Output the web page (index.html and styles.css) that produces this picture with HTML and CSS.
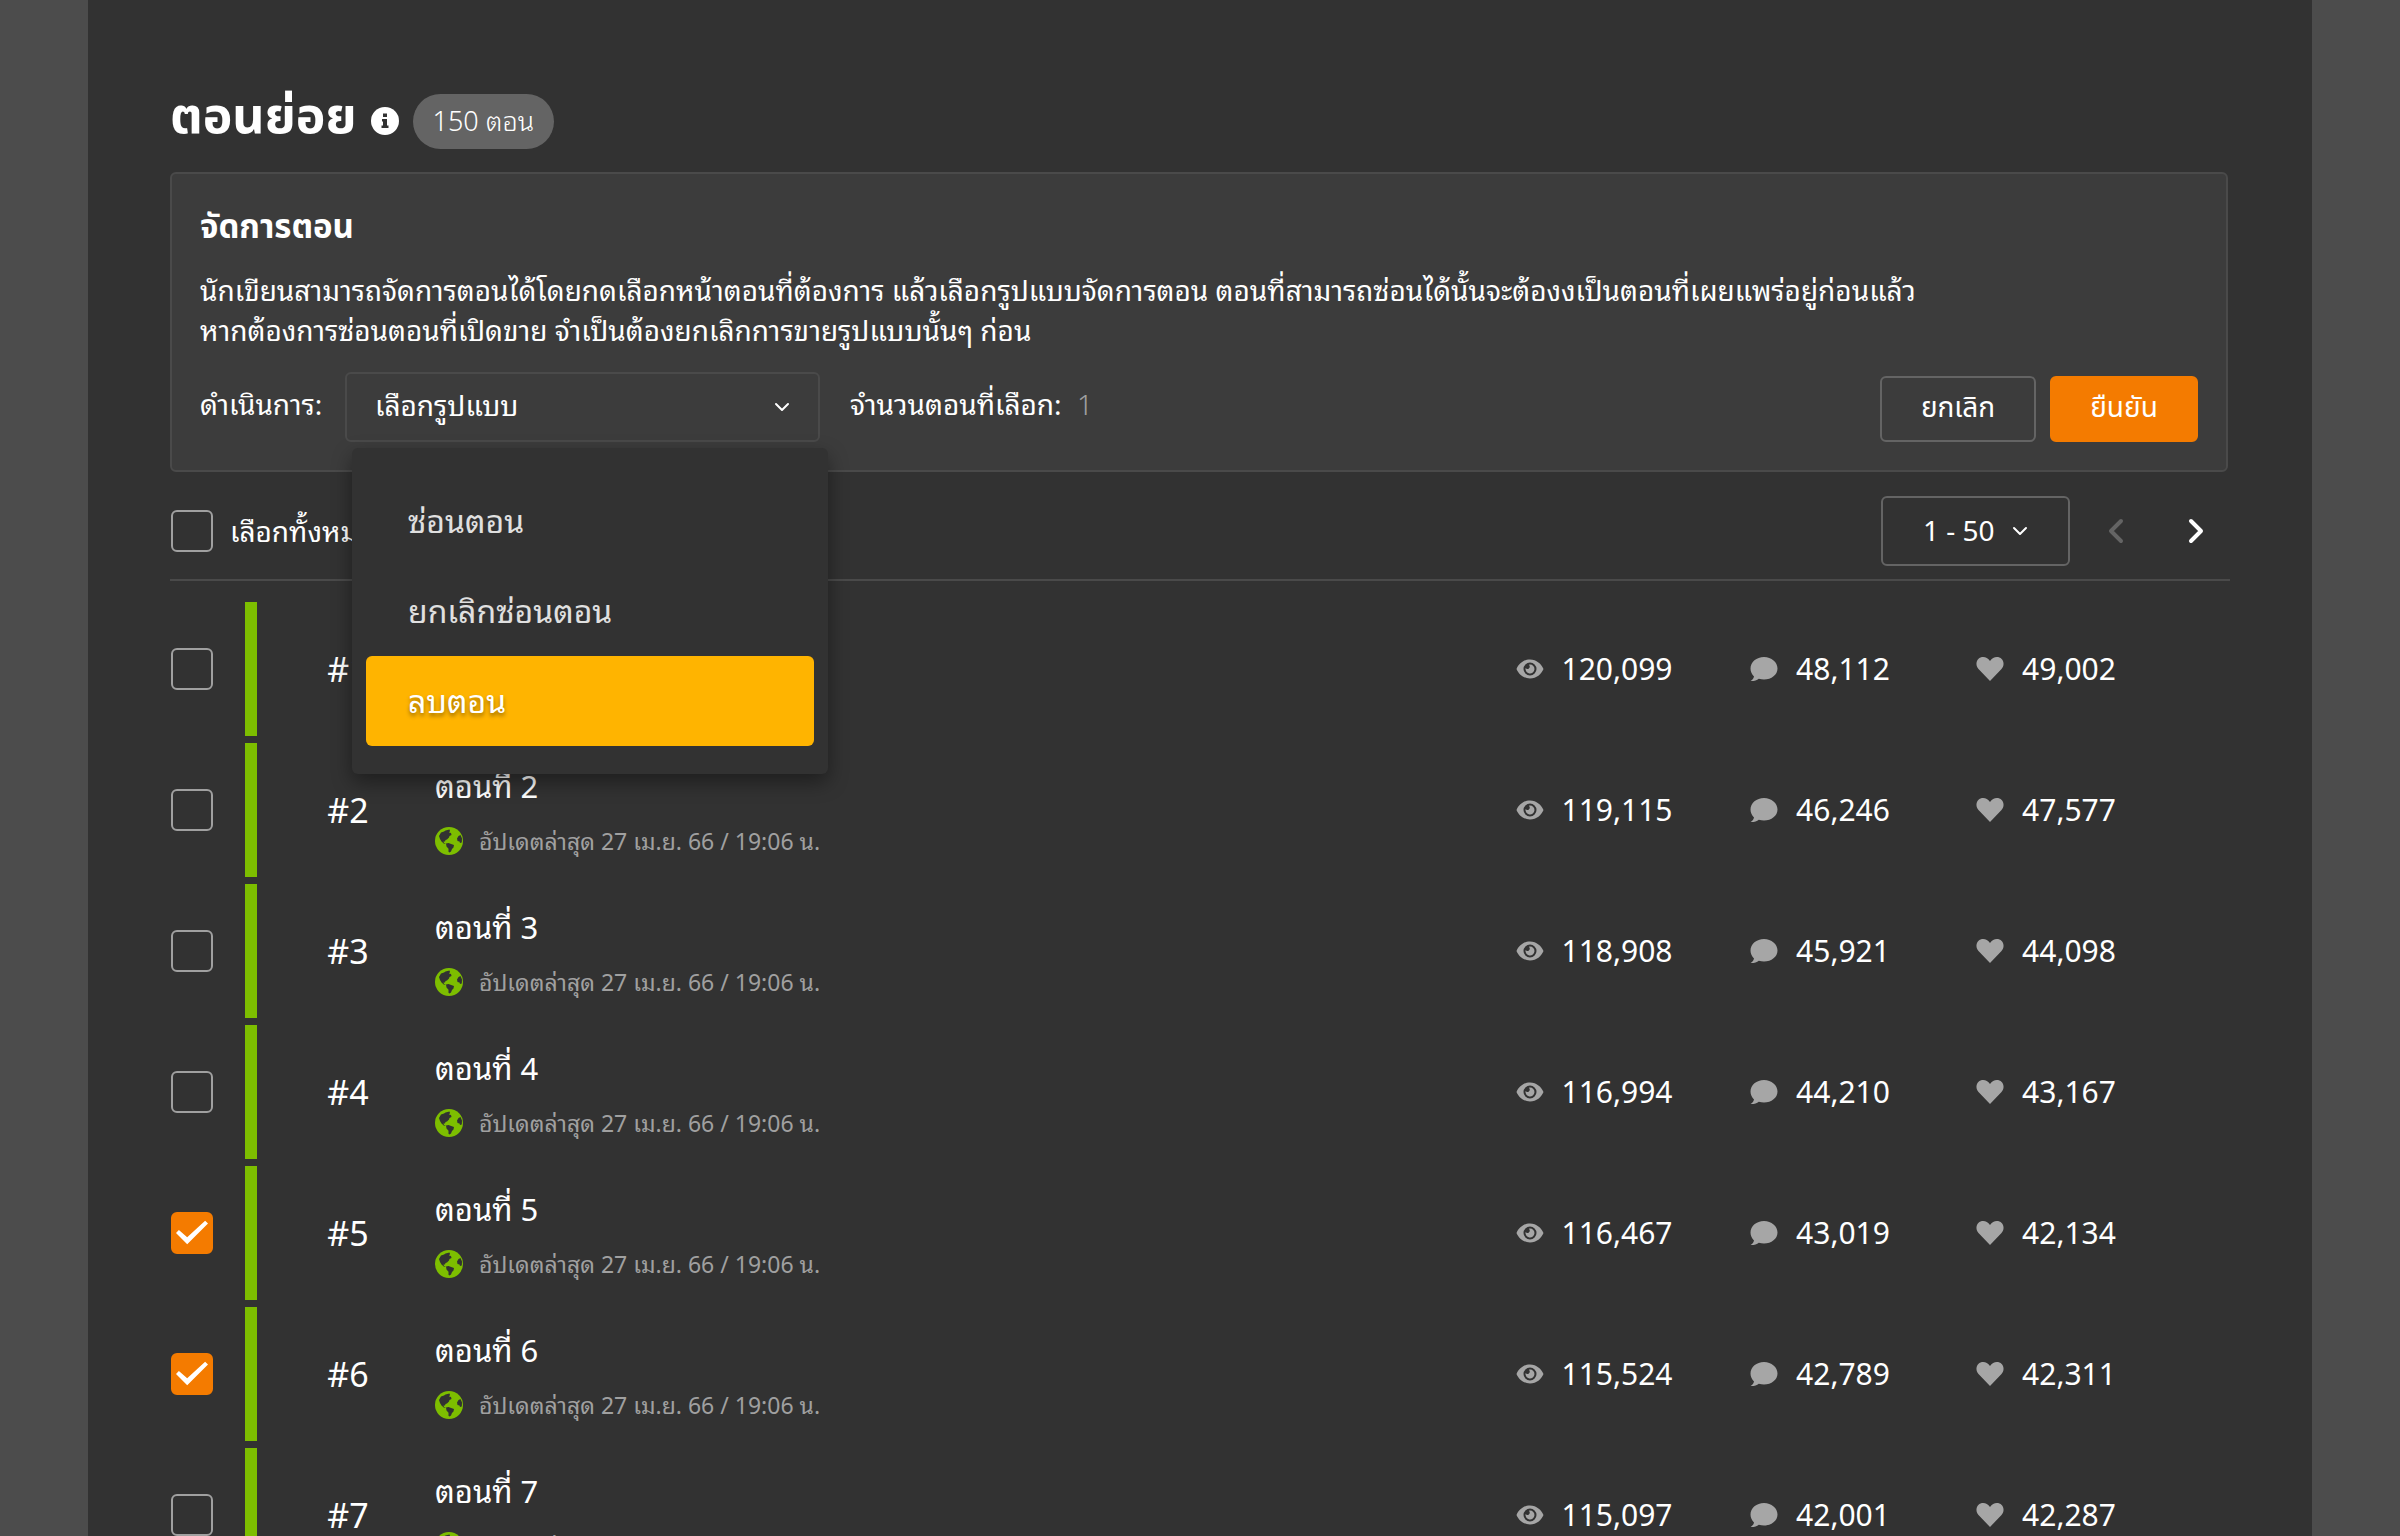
FILE: index.html
```html
<!DOCTYPE html>
<html lang="th">
<head>
<meta charset="utf-8">
<meta name="viewport" content="width=device-width, initial-scale=1">
<title>ตอนย่อย</title>
<link rel="stylesheet" href="styles.css">
</head>
<body>
<svg class="sprite" aria-hidden="true">
  <symbol id="eye" viewBox="0 0 28 20"><path fill-rule="evenodd" d="M14 0.500C7.500 0.500 2.500 5 0.500 10c2 5 7 9.500 13.500 9.500S25.500 15 27.500 10C25.500 5 20.500 0.500 14 0.500zM14 3.500a6.500 6.500 0 1 1 0 13a6.500 6.500 0 1 1 0-13z"/><path d="M14 5.500a4.500 4.500 0 1 1-4.400 3.500a2.300 2.300 0 0 0 3.700-2.800a1 1 0 0 0-.3-.6z"/></symbol>
  <symbol id="comment" viewBox="0 0 28 26"><path d="M14 1C6.500 1 0.500 6 0.500 12.500c0 3 1.300 5.800 3.500 7.900C3.600 22.300 2.600 23.700 0.600 25c3.400.2 6.200-.9 8.200-2.300c1.600.5 3.400.8 5.200.8c7.500 0 13.500-4.700 13.500-11S21.500 1 14 1z"/></symbol>
  <symbol id="heart" viewBox="0 0 28 26"><path d="M14 25L2.500 13C-.2 10-.2 5.500 2.300 3C5.500-.1 11 .4 14 5c3-4.600 8.500-5.100 11.700-2c2.500 2.500 2.500 7-.2 10z"/></symbol>
  <symbol id="globe" viewBox="0 0 28 28"><circle class="sea" cx="14" cy="14" r="14"/><path class="land" d="M4 9L6 5.500l3-1l1.500-1l4-1l.5 1.500l-1 1.500l2 .5l.5 2l-2 1l-.5 1.500L12 12.500l-1.500.5L10 14.500l-1.500 0l.5 1.500l2 1l-2-.3L6.500 14.500L5 12z"/><path class="land" d="M11 16.500l2.500-.5l2 .8l3.500 1.200l-.5 2.500l-1.500 1.500l-1 2.500l-1.500 1l-1-.8v-3l-2-2.200z"/><path class="land" d="M25.500 8l-2 1l-1.500 2.500l.5 2.500l2 .5l.5 1.500l1.800-.5l.2-4z"/></symbol>
  <symbol id="down" viewBox="0 0 16 10"><path class="line" d="M2 2l6 6l6-6"/></symbol>
  <symbol id="left" viewBox="0 0 16 26"><path class="line" d="M13 3L3 13l10 10"/></symbol>
  <symbol id="right" viewBox="0 0 16 26"><path class="line" d="M3 3l10 10L3 23"/></symbol>
</svg>

<main class="page">
  <header class="title-bar">
    <h1 class="title">ตอนย่อย</h1>
    <svg class="info" viewBox="0 0 28 28" aria-hidden="true"><circle cx="14" cy="14" r="14"/><path d="M12 6.500h4v3.500h-4zM11 12h5v6.500h1.500V21h-7v-2.500H12v-4h-1z"/></svg>
    <span class="badge">150 ตอน</span>
  </header>

  <section class="manage">
    <h2 class="manage-title">จัดการตอน</h2>
    <p class="manage-text">นักเขียนสามารถจัดการตอนได้โดยกดเลือกหน้าตอนที่ต้องการ แล้วเลือกรูปแบบจัดการตอน ตอนที่สามารถซ่อนได้นั้นจะต้องงเป็นตอนที่เผยแพร่อยู่ก่อนแล้ว<br>หากต้องการซ่อนตอนที่เปิดขาย จำเป็นต้องยกเลิกการขายรูปแบบนั้นๆ ก่อน</p>
    <div class="manage-row">
      <label class="manage-label" for="action">ดำเนินการ:</label>
      <div class="picker">
        <select class="picker-select" id="action"><option>เลือกรูปแบบ</option></select>
        <svg class="picker-arrow" aria-hidden="true"><use href="#down"/></svg>
        <div class="menu">
          <button class="menu-item" type="button">ซ่อนตอน</button>
          <button class="menu-item" type="button">ยกเลิกซ่อนตอน</button>
          <button class="menu-item menu-item-active" type="button">ลบตอน</button>
        </div>
      </div>
      <p class="count">จำนวนตอนที่เลือก: <span class="count-value">1</span></p>
      <div class="actions">
        <button class="button" type="button">ยกเลิก</button>
        <button class="button button-primary" type="button">ยืนยัน</button>
      </div>
    </div>
  </section>

  <div class="toolbar">
    <label class="select-all"><input class="check" type="checkbox">เลือกทั้งหมด</label>
    <div class="pager">
      <div class="range">
        <select class="range-select" aria-label="ช่วงตอน"><option>1 - 50</option></select>
        <svg class="range-arrow" aria-hidden="true"><use href="#down"/></svg>
      </div>
      <button class="step" type="button" aria-label="ก่อนหน้า" disabled><svg class="step-icon"><use href="#left"/></svg></button>
      <button class="step" type="button" aria-label="ถัดไป"><svg class="step-icon"><use href="#right"/></svg></button>
    </div>
  </div>

  <table class="episodes">
    <colgroup><col class="col-check"><col class="col-bar"><col class="col-number"><col><col class="col-stat"><col class="col-stat"><col class="col-stat"><col class="col-end"></colgroup>
    <tbody id="rows"></tbody>
  </table>
</main>
<script src="episodes.js"></script>
</body>
</html>
```
FILE: styles.css
```css
* {
  box-sizing: border-box;
}

body {
  margin: 0;
  padding: 0 88px;
  background: #4c4c4c;
  color: #fff;
  font-family: "Noto Sans", "Noto Sans Thai Looped", "Noto Looped Thai", "Noto Sans Thai", "Open Sans", sans-serif;
  font-size: 28px;
  font-weight: 400;
  line-height: 40px;
}

h1, h2, p {
  margin: 0;
}

button, select, input {
  margin: 0;
  color: inherit;
  font: inherit;
}

.sprite {
  display: none;
}

.line {
  fill: none;
  stroke: currentColor;
  stroke-linecap: round;
  stroke-linejoin: round;
}

.page {
  min-height: 100vh;
  padding: 92px 82px 0;
  background: #323232;
}

.title-bar {
  display: flex;
  align-items: center;
  gap: 14px;
  height: 58px;
  margin-bottom: 22px;
}

.title,
.manage-title {
  font-family: "Noto Sans", "Noto Sans Thai", sans-serif;
  font-weight: 700;
}

.title {
  padding-bottom: 14px;
  font-size: 50px;
}

.info {
  width: 28px;
  height: 28px;
  fill: #fff;
}

.info path {
  fill: #323232;
}

.badge {
  padding: 7px 20px 8px;
  border-radius: 28px;
  background: #646464;
  font-size: 27px;
  font-weight: 300;
}

.manage {
  margin-right: 2px;
  padding: 32px 28px 28px;
  border: 2px solid #4a4a4a;
  border-radius: 6px;
  background: #3c3c3c;
}

.manage-title {
  margin-bottom: 24px;
  font-size: 33px;
}

.manage-row {
  display: flex;
  align-items: flex-end;
  margin-top: 22px;
}

.manage-label {
  width: 145px;
}

.manage-label,
.count {
  padding-bottom: 18px;
}

.picker {
  position: relative;
  width: 475px;
  margin-right: 30px;
}

.picker-select {
  display: block;
  width: 100%;
  height: 70px;
  padding: 0 28px 4px;
  border: 2px solid #4a4a4a;
  border-radius: 6px;
  appearance: none;
  background: transparent;
}

.picker-arrow,
.range-arrow {
  position: absolute;
  top: 30px;
  right: 30px;
  width: 16px;
  height: 10px;
  stroke-width: 2;
  pointer-events: none;
}

.menu {
  position: absolute;
  z-index: 1;
  top: 76px;
  left: 7px;
  width: 476px;
  padding: 28px 14px;
  border-radius: 6px;
  background: #323232;
  box-shadow: 0 8px 20px rgba(0, 0, 0, 0.4);
}

.menu-item {
  display: block;
  width: 100%;
  height: 90px;
  padding: 0 42px;
  border: 0;
  border-radius: 6px;
  background: transparent;
  color: #e0e0e0;
  font-size: 32px;
  text-align: left;
}

.menu-item-active {
  background: #ffb400;
  color: #fff;
  text-shadow: 0 3px 4px rgba(0, 0, 0, 0.4);
}

.count-value {
  margin-left: 8px;
  color: #a0a0a0;
  font-weight: 300;
}

.actions {
  display: flex;
  gap: 14px;
  margin-left: auto;
}

.button {
  width: 156px;
  height: 66px;
  padding-bottom: 7px;
  border: 2px solid #646464;
  border-radius: 6px;
  background: transparent;
  font-family: "Noto Sans", "Noto Sans Thai", sans-serif;
}

.button-primary {
  width: 148px;
  border-color: #f47b00;
  background: #f47b00;
}

.toolbar {
  display: flex;
  align-items: center;
  justify-content: space-between;
  height: 109px;
  padding-top: 10px;
  border-bottom: 2px solid #4a4a4a;
}

.select-all {
  display: flex;
  align-items: center;
  gap: 17px;
}

.check {
  display: block;
  width: 42px;
  height: 42px;
  margin-left: 1px;
  border: 2px solid #a0a0a0;
  border-radius: 6px;
  appearance: none;
}

.check:checked {
  border-color: #f47b00;
  background: #f47b00;
}

.check:checked::before {
  content: "";
  display: block;
  width: 32px;
  height: 26px;
  margin: 6px 3px;
  background: #fff;
  clip-path: polygon(0 50%, 9% 38%, 35% 66%, 91% 3%, 100% 13%, 35% 93%);
}

.pager {
  display: flex;
  align-items: center;
}

.range {
  position: relative;
  width: 189px;
  margin-right: 6px;
}

.range-select {
  display: block;
  width: 100%;
  height: 70px;
  padding: 0 40px 2px;
  border: 2px solid #646464;
  border-radius: 6px;
  appearance: none;
  background: transparent;
}

.range-arrow {
  right: 42px;
}

.step {
  display: flex;
  align-items: center;
  justify-content: center;
  width: 56px;
  height: 56px;
  margin-right: 12px;
  margin-left: 12px;
  padding: 0;
  border: 0;
  background: transparent;
}

.step:last-child {
  margin-right: 6px;
}

.step:disabled {
  color: #646464;
}

.step-icon {
  width: 16px;
  height: 26px;
  stroke-width: 4;
}

.episodes {
  width: 100%;
  margin-top: 14px;
  border-spacing: 0 7px;
  table-layout: fixed;
}

.episodes td {
  height: 134px;
  padding: 0;
}

.col-check {
  width: 75px;
}

.col-bar {
  width: 12px;
}

.col-number {
  width: 178px;
}

.col-stat {
  width: 226px;
}

.col-end {
  width: 71px;
}

.episodes .bar {
  background: #7dbe00;
}

.episodes .number {
  padding-left: 4px;
  font-size: 34px;
  text-align: center;
}

.name {
  margin-top: 7px;
  margin-bottom: 15px;
  font-size: 31px;
}

.updated {
  display: flex;
  align-items: center;
  gap: 16px;
  color: #a0a0a0;
  font-size: 23px;
}

.globe {
  width: 28px;
  height: 28px;
}

.sea {
  fill: #7dbe00;
}

.land {
  fill: #323232;
}

.stat {
  display: flex;
  align-items: center;
  justify-content: center;
  gap: 18px;
  font-size: 30px;
}

.stat-icon {
  width: 28px;
  height: 26px;
  fill: #a6a6a6;
}
```
FILE: episodes.js
```js
const episodes = [
  { views: "120,099", comments: "48,112", likes: "49,002" },
  { views: "119,115", comments: "46,246", likes: "47,577" },
  { views: "118,908", comments: "45,921", likes: "44,098" },
  { views: "116,994", comments: "44,210", likes: "43,167" },
  { views: "116,467", comments: "43,019", likes: "42,134", checked: true },
  { views: "115,524", comments: "42,789", likes: "42,311", checked: true },
  { views: "115,097", comments: "42,001", likes: "42,287" },
];

const stat = (icon, value) =>
  `<td><div class="stat"><svg class="stat-icon" aria-hidden="true"><use href="#${icon}"/></svg>${value}</div></td>`;

document.getElementById("rows").innerHTML = episodes.map((episode, index) => {
  const number = index + 1;
  return `<tr>
    <td><input class="check" type="checkbox" aria-label="ตอนที่ ${number}"${episode.checked ? " checked" : ""}></td>
    <td class="bar"></td>
    <td class="number">#${number}</td>
    <td>
      <div class="name">ตอนที่ ${number}</div>
      <div class="updated"><svg class="globe" aria-hidden="true"><use href="#globe"/></svg>อัปเดตล่าสุด 27 เม.ย. 66 / 19:06 น.</div>
    </td>
    ${stat("eye", episode.views)}${stat("comment", episode.comments)}${stat("heart", episode.likes)}
    <td></td>
  </tr>`;
}).join("");
```
